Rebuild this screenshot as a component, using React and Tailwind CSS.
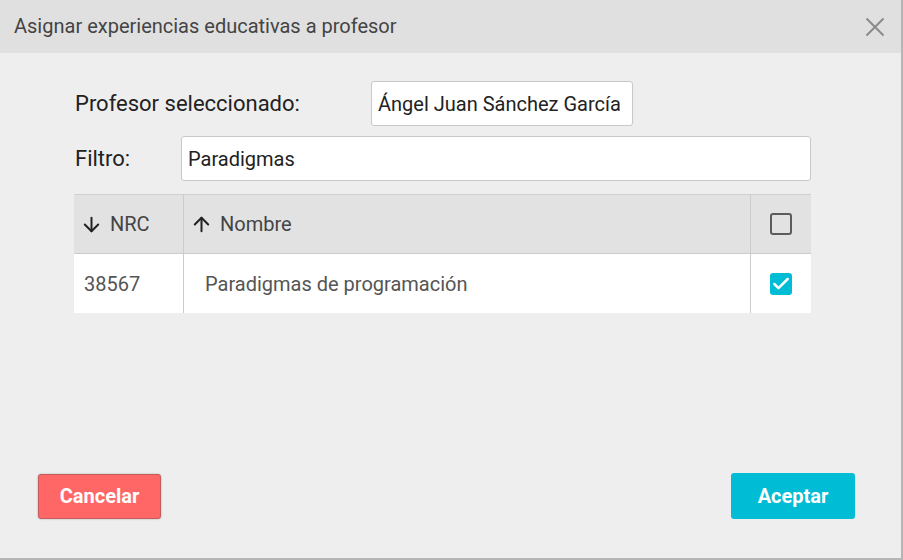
import { ArrowDown, ArrowUp, Check } from 'lucide-react'

export default function App() {
    return (
        <div className="w-[903px] h-[560px] bg-[#b5b5b5] font-['Roboto',sans-serif]">
            <div className="w-[901px] h-[558px] bg-[#eeeeee] flex flex-col">
                {/* header */}
                <div className="h-[53px] bg-[#e0e0e0] flex items-center justify-between pl-[14px] pr-[16px]">
                    <h2 className="text-[20px] text-[#444] pb-[1px]">Asignar experiencias educativas a profesor</h2>
                    <svg width="20" height="20" viewBox="0 0 20 20" className="text-[#8a8a8a]">
                        <path d="M1.5 1.5 L18.5 18.5 M18.5 1.5 L1.5 18.5" stroke="currentColor" strokeWidth="2" fill="none" />
                    </svg>
                </div>

                <div className="flex-1 flex flex-col pl-[74px] pt-[28px]">
                    <div className="flex items-center h-[45px]">
                        <label className="w-[297px] pl-[1px] text-[22px] text-[#222]">Profesor seleccionado:</label>
                        <div className="h-[45px] w-[262px] bg-white border border-[#c8c8c8] rounded-[3px] flex items-center px-[6px] text-[20px] text-[#222]">
                            Ángel Juan Sánchez García
                        </div>
                    </div>
                    <div className="flex items-center h-[45px] mt-[10px]">
                        <label className="w-[107px] pl-[1px] text-[22px] text-[#222]">Filtro:</label>
                        <div className="h-[45px] w-[630px] bg-white border border-[#c8c8c8] rounded-[3px] flex items-center px-[6px] text-[20px] text-[#222]">
                            Paradigmas
                        </div>
                    </div>

                    <div className="mt-[13px] w-[737px]">
                        <div className="flex h-[60px] bg-[#e2e2e2] border-t border-[#d0d0d0] border-b border-b-[#cccccc]">
                            <div className="w-[110px] border-r border-[#cccccc] flex items-center pl-[6px] gap-[7px] text-[20px] text-[#444]">
                                <ArrowDown className="w-[23px] h-[23px] text-[#222]" strokeWidth={2.1} />
                                NRC
                            </div>
                            <div className="flex-1 border-r border-[#cccccc] flex items-center pl-[6px] gap-[7px] text-[20px] text-[#444]">
                                <ArrowUp className="w-[23px] h-[23px] text-[#222]" strokeWidth={2.1} />
                                Nombre
                            </div>
                            <div className="w-[60px] flex items-center justify-center">
                                <div className="w-[22px] h-[22px] border-2 border-[#5c5c5c] rounded-[3px]" />
                            </div>
                        </div>
                        <div className="flex h-[59px] bg-white">
                            <div className="w-[110px] border-r border-[#cccccc] flex items-center pl-[10px] text-[20px] text-[#555]">
                                38567
                            </div>
                            <div className="flex-1 border-r border-[#cccccc] flex items-center pl-[21px] text-[20px] text-[#555]">
                                Paradigmas de programación
                            </div>
                            <div className="w-[60px] flex items-center justify-center">
                                <div className="w-[22px] h-[22px] bg-[#00bcd4] rounded-[3px] flex items-center justify-center">
                                    <Check className="w-[20px] h-[20px] text-white" strokeWidth={3} />
                                </div>
                            </div>
                        </div>
                    </div>

                    <div className="flex-1" />

                    <div className="flex justify-between items-center -ml-[36px] mr-[46px] pb-[39px]">
                        <button className="w-[123px] h-[45px] bg-[#ff6666] border border-[#c45c5c] rounded-[3px] text-white font-bold text-[20px] shadow-[0_0_2px_rgba(0,0,0,0.3)]">
                            Cancelar
                        </button>
                        <button className="w-[124px] h-[46px] bg-[#00bcd4] rounded-[3px] text-white font-bold text-[20px]">
                            Aceptar
                        </button>
                    </div>
                </div>
            </div>
        </div>
    )
}
